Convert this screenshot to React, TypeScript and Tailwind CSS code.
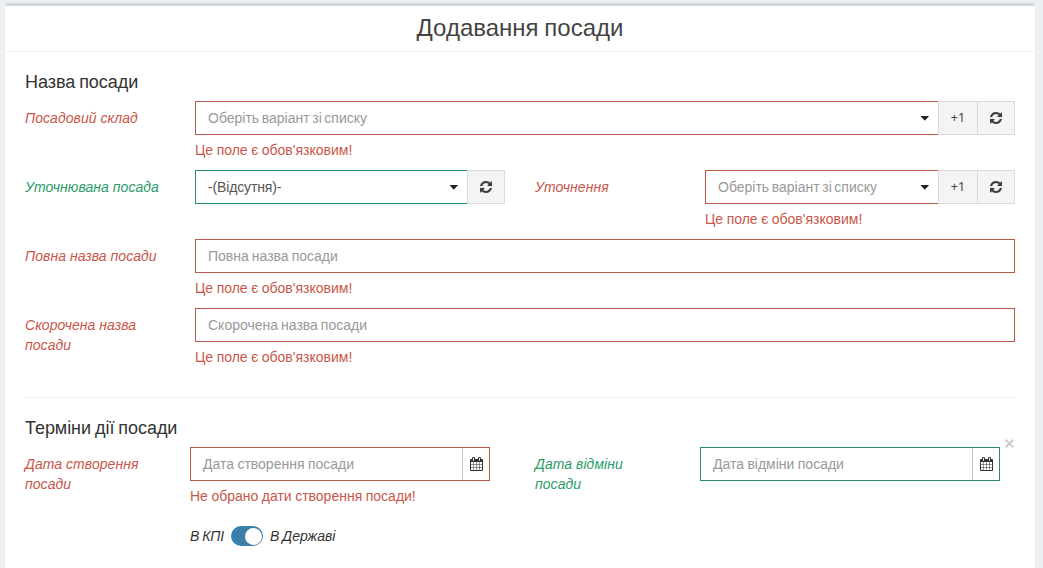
import type { ReactNode } from "react";

type Tone = "error" | "ok";

const labelTone: Record<Tone, string> = {
  error: "text-[#c8574b]",
  ok: "text-[#2b9c69]",
};

const borderTone: Record<Tone, string> = {
  error: "border-[#b9574b]",
  ok: "border-[#26905f]",
};

function RefreshIcon() {
  return (
    <svg viewBox="0 0 1536 1536" className="h-3 w-3" fill="currentColor" stroke="currentColor" strokeWidth="20" aria-hidden="true">
      <path d="M1511 928q0 5-1 7-64 268-268 434.5t-478 166.5q-146 0-282.5-55t-243.5-157l-129 129q-19 19-45 19t-45-19-19-45v-448q0-26 19-45t45-19h448q26 0 45 19t19 45-19 45l-137 137q71 66 161 102t187 36q134 0 250-65t186-179q11-17 53-117 8-23 30-23h192q13 0 22.5 9.5t9.5 22.5zM1536 128v448q0 26-19 45t-45 19h-448q-26 0-45-19t-19-45 19-45l138-138q-148-137-349-137-134 0-250 65t-186 179q-11 17-53 117-8 23-30 23h-199q-13 0-22.5-9.5t-9.5-22.5v-7q65-268 270-434.5t480-166.5q146 0 284 55.5t245 156.5l130-129q19-19 45-19t45 19 19 45z" />
    </svg>
  );
}

function CalendarIcon() {
  return (
    <svg viewBox="64 0 1664 1792" className="h-3.5 w-[13px]" fill="currentColor" aria-hidden="true">
      <path d="M192 1664h288v-288h-288v288zm352 0h320v-288h-320v288zm-352-352h288v-320h-288v320zm352 0h320v-320h-320v320zm-352-384h288v-288h-288v288zm736 736h320v-288h-320v288zm-384-736h320v-288h-320v288zm768 736h288v-288h-288v288zm-384-352h320v-320h-320v320zm-352-864v-288q0-13-9.5-22.5t-22.5-9.5h-64q-13 0-22.5 9.5t-9.5 22.5v288q0 13 9.5 22.5t22.5 9.5h64q13 0 22.5-9.5t9.5-22.5zm736 864h288v-320h-288v320zm-384-384h320v-288h-320v288zm384 0h288v-288h-288v288zm32-480v-288q0-13-9.5-22.5t-22.5-9.5h-64q-13 0-22.5 9.5t-9.5 22.5v288q0 13 9.5 22.5t22.5 9.5h64q13 0 22.5-9.5t9.5-22.5zm384-64v1280q0 52-38 90t-90 38h-1408q-52 0-90-38t-38-90v-1280q0-52 38-90t90-38h128v-96q0-66 47-113t113-47h64q66 0 113 47t47 113v96h384v-96q0-66 47-113t113-47h64q66 0 113 47t47 113v96h128q52 0 90 38t38 90z" />
    </svg>
  );
}

function Label({ tone, className, children }: { tone: Tone; className: string; children: ReactNode }) {
  return (
    <div className={`shrink-0 pt-[7px] tracking-[0.05px] italic [word-spacing:0] ${labelTone[tone]} ${className}`}>
      {children}
    </div>
  );
}

function Help({ children }: { children: ReactNode }) {
  return <p className="mt-[5px] whitespace-nowrap text-[#c8574b] [word-spacing:-0.4px]">{children}</p>;
}

function Select({ tone, filled, plus, children }: { tone: Tone; filled?: boolean; plus?: boolean; children: ReactNode }) {
  return (
    <div className="flex h-[34px]">
      <div className={`flex flex-1 items-center justify-between border border-r-0 pr-2 pl-3 ${borderTone[tone]}`}>
        <span className={`whitespace-nowrap [word-spacing:-1.3px] ${filled ? "tracking-[-0.15px] text-[#555555]" : "text-[#999999]"}`}>
          {children}
        </span>
        <svg viewBox="0 0 10 5" className="h-[5px] w-2.5" fill="#222222" aria-hidden="true">
          <path d="M.5 0h8.6L4.8 4.8z" />
        </svg>
      </div>
      {plus && (
        <button className="w-[39px] border border-r-0 border-[#d8dadc] bg-[#f4f4f4] font-['Noto_Sans',sans-serif] text-[12.5px] text-[#444444]">
          +1
        </button>
      )}
      <button className="flex w-[38px] items-center justify-center border border-[#d8dadc] bg-[#f4f4f4] text-[#3c3c3c]">
        <RefreshIcon />
      </button>
    </div>
  );
}

function TextField({ children }: { children: ReactNode }) {
  return <div className="flex h-[34px] items-center border border-[#b9574b] px-3 text-[#999999]">{children}</div>;
}

function DateField({ tone, children }: { tone: Tone; children: ReactNode }) {
  return (
    <div className={`flex h-[34px] w-[300px] border ${borderTone[tone]}`}>
      <div className="flex flex-1 items-center px-3 text-[#999999] [word-spacing:-0.5px]">{children}</div>
      <div className="flex w-[27px] items-center justify-center border-l border-[#c4c4c4] text-[#333333]">
        <CalendarIcon />
      </div>
    </div>
  );
}

export default function App() {
  return (
    <div className="h-[568px] w-[1043px] overflow-hidden bg-[#ecf0f5] pt-[3px] pr-2 pl-[5px] font-['Liberation_Sans',Arial,sans-serif] text-sm leading-5 [word-spacing:-0.9px]">
      <main className="h-[600px] rounded-[3px] border-t-[3px] border-[#d2d6de] bg-white shadow-[0_1px_1px_rgba(0,0,0,0.1)]">
        <header className="flex h-[46px] items-center justify-center border-b border-[#f0f0f0] pb-0.5">
          <h1 className="text-2xl text-[#444444]">Додавання посади</h1>
        </header>

        <div className="px-5">
          <section className="pt-5">
            <h2 className="text-lg leading-5 tracking-[-0.06px] text-[#333333]">Назва посади</h2>

            <div className="mt-[9px] flex h-[69px]">
              <Label tone="error" className="w-[170px]">Посадовий склад</Label>
              <div className="flex-1">
                <Select tone="error" plus>Оберіть варіант зі списку</Select>
                <Help>Це поле є обов'язковим!</Help>
              </div>
            </div>

            <div className="flex h-[69px]">
              <Label tone="ok" className="w-[170px]">Уточнювана посада</Label>
              <div className="w-[310px]">
                <Select tone="ok" filled>-(Відсутня)-</Select>
              </div>
              <Label tone="error" className="ml-[30px] w-[170px]">Уточнення</Label>
              <div className="flex-1">
                <Select tone="error" plus>Оберіть варіант зі списку</Select>
                <Help>Це поле є обов'язковим!</Help>
              </div>
            </div>

            <div className="flex h-[69px]">
              <Label tone="error" className="w-[170px]">Повна назва посади</Label>
              <div className="flex-1">
                <TextField>Повна назва посади</TextField>
                <Help>Це поле є обов'язковим!</Help>
              </div>
            </div>

            <div className="flex h-[69px]">
              <Label tone="error" className="w-[170px] pr-10">Скорочена назва посади</Label>
              <div className="flex-1">
                <TextField>Скорочена назва посади</TextField>
                <Help>Це поле є обов'язковим!</Help>
              </div>
            </div>
          </section>

          <hr className="mt-5 border-[#eeeeee]" />

          <section className="relative pt-5">
            <h2 className="text-lg leading-5 tracking-[-0.06px] text-[#333333]">Терміни дії посади</h2>
            <button className="absolute top-[41px] right-0 flex h-[9px] w-[11px] items-center justify-center text-[#cccccc]" aria-label="×">
              <svg viewBox="0 0 9 9" className="h-[9px] w-[9px]" stroke="currentColor" strokeWidth="2" aria-hidden="true">
                <path d="M.7.7l7.6 7.6M8.3.7L.7 8.3" />
              </svg>
            </button>

            <div className="mt-[9px] flex">
              <Label tone="error" className="w-[165px] pr-10">Дата створення посади</Label>
              <div className="w-[300px]">
                <DateField tone="error">Дата створення посади</DateField>
                <Help>Не обрано дати створення посади!</Help>
                <div className="mt-5 flex items-center gap-[7px] whitespace-nowrap text-[#333333] italic">
                  <span className="w-[34px] tracking-[-0.1px]">В КПІ</span>
                  <span className="flex h-5 w-8 items-center justify-end rounded-full bg-[#3a80ab] px-px">
                    <span className="size-[17px] rounded-full bg-white" />
                  </span>
                  <span>В Державі</span>
                </div>
              </div>
              <Label tone="ok" className="ml-[45px] w-[165px] pr-10">Дата відміни посади</Label>
              <DateField tone="ok">Дата відміни посади</DateField>
            </div>
          </section>
        </div>
      </main>
    </div>
  );
}
